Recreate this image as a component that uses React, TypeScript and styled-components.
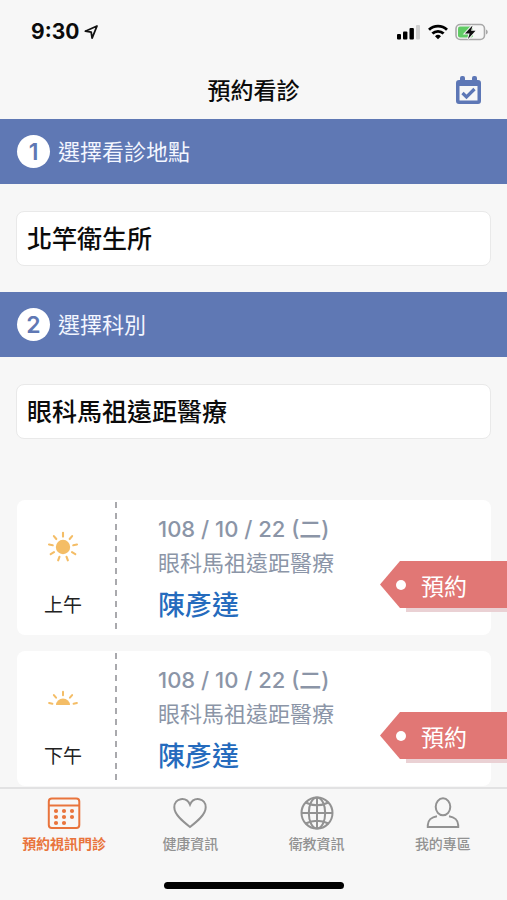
import React from "react";
import styled, { createGlobalStyle } from "styled-components";

const GlobalStyle = createGlobalStyle`
  *, *::before, *::after { box-sizing: border-box; }
  body {
    margin: 0;
    background: #f7f7f7;
    color: #0b0b0b;
    font-family: Inter, "Noto Sans CJK TC", sans-serif;
  }
  button, select { font: inherit; color: inherit; }
`;

const Screen = styled.div`
  display: flex;
  flex-direction: column;
  height: 100vh;
`;

const StatusBar = styled.div`
  display: flex;
  justify-content: space-between;
  align-items: center;
  flex: none;
  height: 64px;
  padding: 0 18px 0 31px;
`;

const StatusGroup = styled.div<{ $gap: number }>`
  display: flex;
  align-items: center;
  gap: ${(p) => p.$gap}px;
`;

const Clock = styled.span`
  font-size: 21px;
  font-weight: 700;
  line-height: 24px;
`;

const Header = styled.header`
  display: grid;
  grid-template-columns: 1fr auto 1fr;
  align-items: center;
  flex: none;
  height: 55px;
  padding: 0 25px 2px;
`;

const Title = styled.h1`
  grid-column: 2;
  margin: 0;
  font-size: 23px;
  font-weight: 500;
  line-height: 32px;
`;

const IconButton = styled.button`
  justify-self: end;
  display: flex;
  padding: 0;
  border: 0;
  background: none;
  color: #5d77b6;
`;

const Content = styled.main`
  flex: 1;
  min-height: 0;
  overflow-y: auto;
  scrollbar-width: none;
`;

const StepBar = styled.label`
  display: flex;
  align-items: center;
  gap: 8px;
  height: 65px;
  padding: 0 17px;
  background: #5f78b4;
  color: #f3f6ff;
  font-size: 22px;
  font-weight: 400;
  line-height: 32px;
`;

const StepNumber = styled.span`
  display: grid;
  place-items: center;
  width: 33px;
  height: 33px;
  border-radius: 50%;
  background: #fff;
  color: #5f78b4;
  font-size: 23px;
  font-weight: 600;
`;

const Field = styled.div`
  padding: 27px 16px 26px;
`;

const Select = styled.select`
  display: block;
  width: 100%;
  height: 55px;
  padding: 0 10px;
  border: 1px solid #e9e9e9;
  border-radius: 8px;
  background: #fff;
  appearance: none;
  font-size: 25px;
  font-weight: 500;
`;

const SlotList = styled.ul`
  display: flex;
  flex-direction: column;
  gap: 16px;
  margin: 0;
  padding: 35px 16px 16px 17px;
  list-style: none;
`;

const Slot = styled.li`
  display: flex;
  align-items: flex-start;
  height: 135px;
  border-radius: 8px;
  background: #fff;
`;

const Period = styled.div`
  display: flex;
  flex-direction: column;
  align-items: center;
  flex: none;
  width: 98px;
  padding: 31px 6px 0 0;
  gap: 29px;
  font-size: 19px;
  line-height: 28px;
  color: #222;
`;

const Perforation = styled.div`
  flex: none;
  width: 2px;
  height: 132px;
  margin-top: 2px;
  background: repeating-linear-gradient(#a9a9ad 0 6px, transparent 6px 11px);
`;

const Details = styled.div`
  flex: 1;
  min-width: 0;
  padding: 12px 0 0 41px;
  color: #8b95a7;
  font-size: 22px;
  line-height: 34px;
  white-space: nowrap;
`;

const DateText = styled.div`
  font-weight: 500;
`;

const Department = styled.div``;

const Doctor = styled.div`
  color: #256bbd;
  font-size: 27px;
  font-weight: 500;
  line-height: 52px;
`;

const BookButton = styled.button`
  position: relative;
  flex: none;
  display: flex;
  align-items: center;
  gap: 15px;
  width: 127px;
  height: 47px;
  margin: 61px -16px 0 0;
  padding: 0 0 0 16px;
  border: 0;
  background: none;
  color: #fff;
  font-size: 23px;
  isolation: isolate;

  &::before {
    content: "";
    position: absolute;
    z-index: -1;
    inset: 0;
    background: #e17775;
    clip-path: polygon(0 50%, 20px 0, 100% 0, 100% 100%, 20px 100%);
  }

  &::after {
    content: "";
    position: absolute;
    z-index: -2;
    inset: 43px 0 -4px 26px;
    background: #ead1d4;
  }
`;

const Hole = styled.span`
  width: 10px;
  height: 10px;
  border-radius: 50%;
  background: #fff;
`;

const TabBar = styled.nav`
  display: grid;
  grid-template-columns: repeat(4, 1fr);
  flex: none;
  height: 83px;
  padding: 0 1px;
  border-top: 2px solid #e2e2e3;
`;

const Tab = styled.a<{ $active?: boolean }>`
  display: flex;
  flex-direction: column;
  align-items: center;
  gap: 4px;
  padding-top: 7px;
  color: ${(p) => (p.$active ? "#e9743c" : "#929292")};
  font-size: 14px;
  font-weight: ${(p) => (p.$active ? 700 : 500)};
  line-height: 20px;
  text-decoration: none;
  white-space: nowrap;
`;

const HomeArea = styled.div`
  display: flex;
  justify-content: center;
  flex: none;
  height: 30px;
  padding-top: 12px;
`;

const HomeIndicator = styled.div`
  width: 180px;
  height: 7px;
  border-radius: 4px;
  background: #000;
`;

const LocationIcon = () => (
  <svg width="15" height="16" viewBox="0 0 15 16" fill="none" stroke="#111" strokeWidth="1.8" strokeLinejoin="round" aria-hidden="true">
    <path d="M13 2 1.300 7.200l5.900 1 .9 5.900z" />
  </svg>
);

const SignalIcon = () => (
  <svg width="24" height="16" viewBox="0 0 24 16" aria-hidden="true">
    <rect x="0" y="10" width="4" height="5.5" rx="1" />
    <rect x="6" y="7.5" width="4.4" height="8" rx="1" />
    <rect x="12.5" y="4" width="4.4" height="11.5" rx="1" />
    <rect x="19" y="1" width="4" height="14.5" rx="1" fill="#cfcfcf" />
  </svg>
);

const WifiIcon = () => (
  <svg width="20" height="16" viewBox="0 0 20 16" fill="none" stroke="#000" strokeWidth="2.8" aria-hidden="true">
    <path d="M1 5.8a13 13 0 0 1 18 0" />
    <path d="M4.4 9.6a8 8 0 0 1 11.2 0" />
    <path d="M7 12.2a4.3 4.3 0 0 1 6 0L10 15.3z" fill="#000" stroke="none" />
  </svg>
);

const BatteryIcon = () => (
  <svg width="34" height="18" viewBox="0 0 34 18" aria-hidden="true">
    <rect x="1" y="1.5" width="28.5" height="15" rx="4.2" fill="none" stroke="#a8a8a8" strokeWidth="1.6" />
    <path d="M31 6.5c2.3.7 2.3 4.3 0 5z" fill="#a8a8a8" />
    <rect x="3" y="3.5" width="15" height="11" rx="2" fill="#61cb65" />
    <path d="m17.5 2.5-7.5 8h4.6L13 16l7.5-8.2h-4.4z" fill="#111" stroke="#f7f7f7" strokeWidth="2" paintOrder="stroke" />
  </svg>
);

const CalendarCheckIcon = () => (
  <svg width="27" height="30" viewBox="0 0 27 30" aria-hidden="true">
    <path
      fill="currentColor"
      fillRule="evenodd"
      d="M7 0h1q2 0 2 2v2h7V2q0-2 2-2h1q2 0 2 2v2h1q3 0 3 3v18q0 3-3 3H4q-3 0-3-3V7q0-3 3-3h1V2q0-2 2-2ZM4.500 10v14.500h18V10Z"
    />
    <path d="m7.500 17 4 4 8-8" fill="none" stroke="currentColor" strokeWidth="3.2" />
  </svg>
);

const RAYS = [0, 40, 80, 120, 160, 200, 240, 280, 320];

const SunIcon = () => (
  <svg width="32" height="32" viewBox="0 0 32 32" aria-hidden="true">
    <circle cx="16" cy="16" r="7.2" fill="#f4bd66" />
    {RAYS.map((a) => (
      <path key={a} d="M16 1.8v3.800" stroke="#f4bd66" strokeWidth="2.1" strokeLinecap="round" transform={`rotate(${a} 16 16)`} />
    ))}
  </svg>
);

const HalfSunIcon = () => (
  <svg width="32" height="32" viewBox="0 0 32 32" aria-hidden="true">
    <path d="M9 23a7 6.500 0 0 1 14 0z" fill="#f4bd66" />
    {[-78, -40, 0, 40, 78].map((a) => (
      <path key={a} d="M16 9.800v3.400" stroke="#f4bd66" strokeWidth="2" strokeLinecap="round" transform={`rotate(${a} 16 24)`} />
    ))}
  </svg>
);

const TabSvg = styled.svg.attrs({ width: 34, height: 34, viewBox: "0 0 34 34", "aria-hidden": true })`
  fill: none;
  stroke: currentColor;
  stroke-width: 2;
`;

const CalendarIcon = () => (
  <TabSvg>
    <rect x="1.8" y="2.5" width="30.5" height="29.5" rx="3" />
    <path d="M2 9.5h30" />
    {[[9, 15], [17, 15], [25, 15], [9, 21], [17, 21], [25, 21], [9, 27], [17, 27]].map(([x, y]) => (
      <circle key={`${x}-${y}`} cx={x} cy={y} r="2.1" fill="currentColor" stroke="none" />
    ))}
  </TabSvg>
);

const HeartIcon = () => (
  <TabSvg>
    <path d="M17 31C10 25.500 1.300 18.500 1.300 11.200c0-9.400 12-11.200 15.700-2.600 3.700-8.600 15.700-6.800 15.700 2.600C32.700 18.500 24 25.500 17 31Z" />
  </TabSvg>
);

const GlobeIcon = () => (
  <TabSvg>
    <circle cx="17" cy="17" r="15.5" />
    <ellipse cx="17" cy="17" rx="8.2" ry="15.5" />
    <path d="M17 1.500v31M1.500 17h31M5.500 6.500q11.500 5.500 23 0M5.500 27.500q11.500-5.500 23 0" />
  </TabSvg>
);

const PersonIcon = () => (
  <TabSvg>
    <ellipse cx="17" cy="10.8" rx="7.3" ry="8.5" />
    <path d="M11 20.200C5.500 21 1.800 24.500 1.800 29v2h30.400v-2c0-4.500-3.700-8-9.200-8.800" />
  </TabSvg>
);

const steps = [
  { id: "place", label: "選擇看診地點", value: "北竿衛生所" },
  { id: "department", label: "選擇科別", value: "眼科馬祖遠距醫療" },
];

const slots = [
  { period: "上午", Icon: SunIcon },
  { period: "下午", Icon: HalfSunIcon },
];

const tabs = [
  { label: "預約視訊門診", href: "#booking", Icon: CalendarIcon },
  { label: "健康資訊", href: "#health", Icon: HeartIcon },
  { label: "衛教資訊", href: "#education", Icon: GlobeIcon },
  { label: "我的專區", href: "#profile", Icon: PersonIcon },
];

export default function App() {
  return (
    <Screen>
      <GlobalStyle />
      <StatusBar>
        <StatusGroup $gap={5}>
          <Clock>9:30</Clock>
          <LocationIcon />
        </StatusGroup>
        <StatusGroup $gap={7}>
          <SignalIcon />
          <WifiIcon />
          <BatteryIcon />
        </StatusGroup>
      </StatusBar>
      <Header>
        <Title>預約看診</Title>
        <IconButton type="button" aria-label="我的預約">
          <CalendarCheckIcon />
        </IconButton>
      </Header>
      <Content>
        {steps.map((step, i) => (
          <React.Fragment key={step.id}>
            <StepBar htmlFor={step.id}>
              <StepNumber>{i + 1}</StepNumber>
              {step.label}
            </StepBar>
            <Field>
              <Select id={step.id} defaultValue={step.value}>
                <option>{step.value}</option>
              </Select>
            </Field>
          </React.Fragment>
        ))}
        <SlotList>
          {slots.map(({ period, Icon }) => (
            <Slot key={period}>
              <Period>
                <Icon />
                {period}
              </Period>
              <Perforation />
              <Details>
                <DateText>108 / 10 / 22 (二)</DateText>
                <Department>眼科馬祖遠距醫療</Department>
                <Doctor>陳彥達</Doctor>
              </Details>
              <BookButton type="button">
                <Hole />
                預約
              </BookButton>
            </Slot>
          ))}
        </SlotList>
      </Content>
      <TabBar>
        {tabs.map(({ label, href, Icon }, i) => (
          <Tab key={href} href={href} $active={i === 0}>
            <Icon />
            {label}
          </Tab>
        ))}
      </TabBar>
      <HomeArea>
        <HomeIndicator />
      </HomeArea>
    </Screen>
  );
}
